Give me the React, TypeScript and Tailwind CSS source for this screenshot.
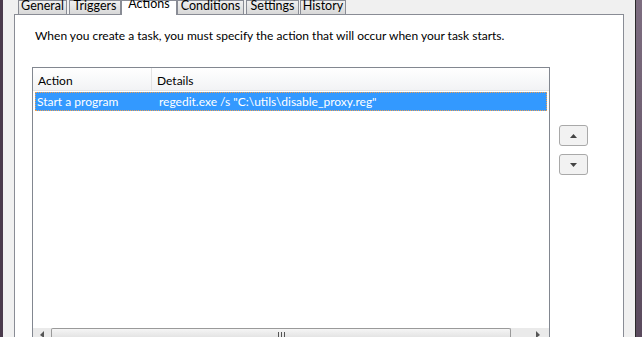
import React from "react";

const tabs = [
  { label: "General", ml: "ml-[4px]", w: "w-[49px]" },
  { label: "Triggers", ml: "ml-[2px]", w: "w-[52px]" },
  { label: "Actions", ml: "ml-0", w: "w-[56px]" },
  { label: "Conditions", ml: "ml-0", w: "w-[67px]" },
  { label: "Settings", ml: "ml-[2px]", w: "w-[53px]" },
  { label: "History", ml: "ml-[1px]", w: "w-[46px]" },
];

export default function App() {
  return (
    <div
      className="w-[642px] h-[337px] overflow-hidden flex bg-[#f0f0f0]"
      style={{ fontFamily: 'Lato, "Noto Sans", sans-serif' }}
    >
      <div className="w-[3px] bg-[#4a3a4c]" />
      <div className="w-[11px] bg-[#f0f0f0]" />

      <div className="w-[610px] flex flex-col">
        {/* tab strip */}
        <div className="flex items-end h-[14px]">
          {tabs.map((t) =>
            t.label === "Actions" ? (
              <div
                key={t.label}
                className={`${t.ml} ${t.w} relative z-10 h-[15px] -mb-[1px] bg-white border border-b-0 border-[#898c95] flex justify-center text-[12.5px] leading-[14px] text-black`}
              >
                <span className="-mt-[4px]">{t.label}</span>
              </div>
            ) : (
              <div
                key={t.label}
                className={`${t.ml} ${t.w} h-[14px] border border-b-0 border-[#898c95] bg-gradient-to-b from-[#f0f0f0] to-[#d8d8d8] flex justify-center text-[12.5px] leading-[14px] text-black`}
              >
                <span className="-mt-[2px]">{t.label}</span>
              </div>
            )
          )}
        </div>

        {/* tab page */}
        <div className="flex-1 bg-white border border-b-0 border-[#898c95] flex flex-col">
          <p className="mt-[13px] ml-[20px] text-[12px] leading-[16px] text-black">
            When you create a task, you must specify the action that will occur when your task starts.
          </p>

          <div className="flex mt-[23px] ml-[17px] flex-1">
            {/* list view */}
            <div className="w-[518px] border border-b-0 border-[#828790] flex flex-col">
              <div className="h-[23px] flex bg-gradient-to-b from-white to-[#f2f3f5] border-b border-[#e5e5e5] text-[12px] leading-[16px] text-black">
                <div className="w-[119px] pl-[5px] pt-[5px] border-r border-[#e3e3e3]">Action</div>
                <div className="pl-[5px] pt-[5px]">Details</div>
              </div>
              <div className="mt-[1px] mx-[2px] h-[19px] bg-[#3399ff] border border-dotted border-[#f0a050] flex text-[12px] leading-[16px] text-white">
                <div className="w-[119px] pl-[1px] pt-[1px]">Start a program</div>
                <div className="pl-[4px] pt-[1px]">regedit.exe /s "C:\utils\disable_proxy.reg"</div>
              </div>
              <div className="flex-1" />
              {/* horizontal scrollbar */}
              <div className="h-[9px] flex bg-[#eaeaea]">
                <div className="w-[18px] flex items-start justify-center pt-[3px]">
                  <svg width="5" height="7" viewBox="0 0 5 7">
                    <path d="M4 0 L0 4 L4 7 Z" fill="#555" />
                  </svg>
                </div>
                <div className="w-[460px] border-t border-l border-r border-[#9a9a9a] rounded-t-[2px] bg-gradient-to-b from-[#f5f5f5] to-[#e4e4e4] flex justify-center pt-[3px] gap-[2px]">
                  <div className="w-[1px] h-[6px] bg-[#555]" />
                  <div className="w-[1px] h-[6px] bg-[#555]" />
                  <div className="w-[1px] h-[6px] bg-[#555]" />
                </div>
                <div className="flex-1 flex items-start justify-end pr-[8px] pt-[3px]">
                  <svg width="5" height="7" viewBox="0 0 5 7">
                    <path d="M0 0 L4 4 L0 7 Z" fill="#555" />
                  </svg>
                </div>
              </div>
            </div>

            {/* move buttons */}
            <div className="ml-[9px] flex flex-col gap-[8px] pt-[58px]">
              <button className="w-[29px] h-[21px] rounded-[3px] border border-[#a9a9a9] bg-[#f2f2f2] flex items-center justify-center">
                <svg width="7" height="4" viewBox="0 0 7 4">
                  <path d="M0 4 L3.5 0 L7 4 Z" fill="#444" />
                </svg>
              </button>
              <button className="w-[29px] h-[21px] rounded-[3px] border border-[#a9a9a9] bg-[#f2f2f2] flex items-center justify-center">
                <svg width="7" height="4" viewBox="0 0 7 4">
                  <path d="M0 0 L3.5 4 L7 0 Z" fill="#444" />
                </svg>
              </button>
            </div>
          </div>
        </div>
      </div>

      <div className="w-[11px] bg-[#f0f0f0]" />
      <div className="w-[1px] bg-[#2a2a2a]" />
      <div className="flex-1 bg-gradient-to-b from-[#7d6d80] to-[#5a4a5d]" />
    </div>
  );
}
